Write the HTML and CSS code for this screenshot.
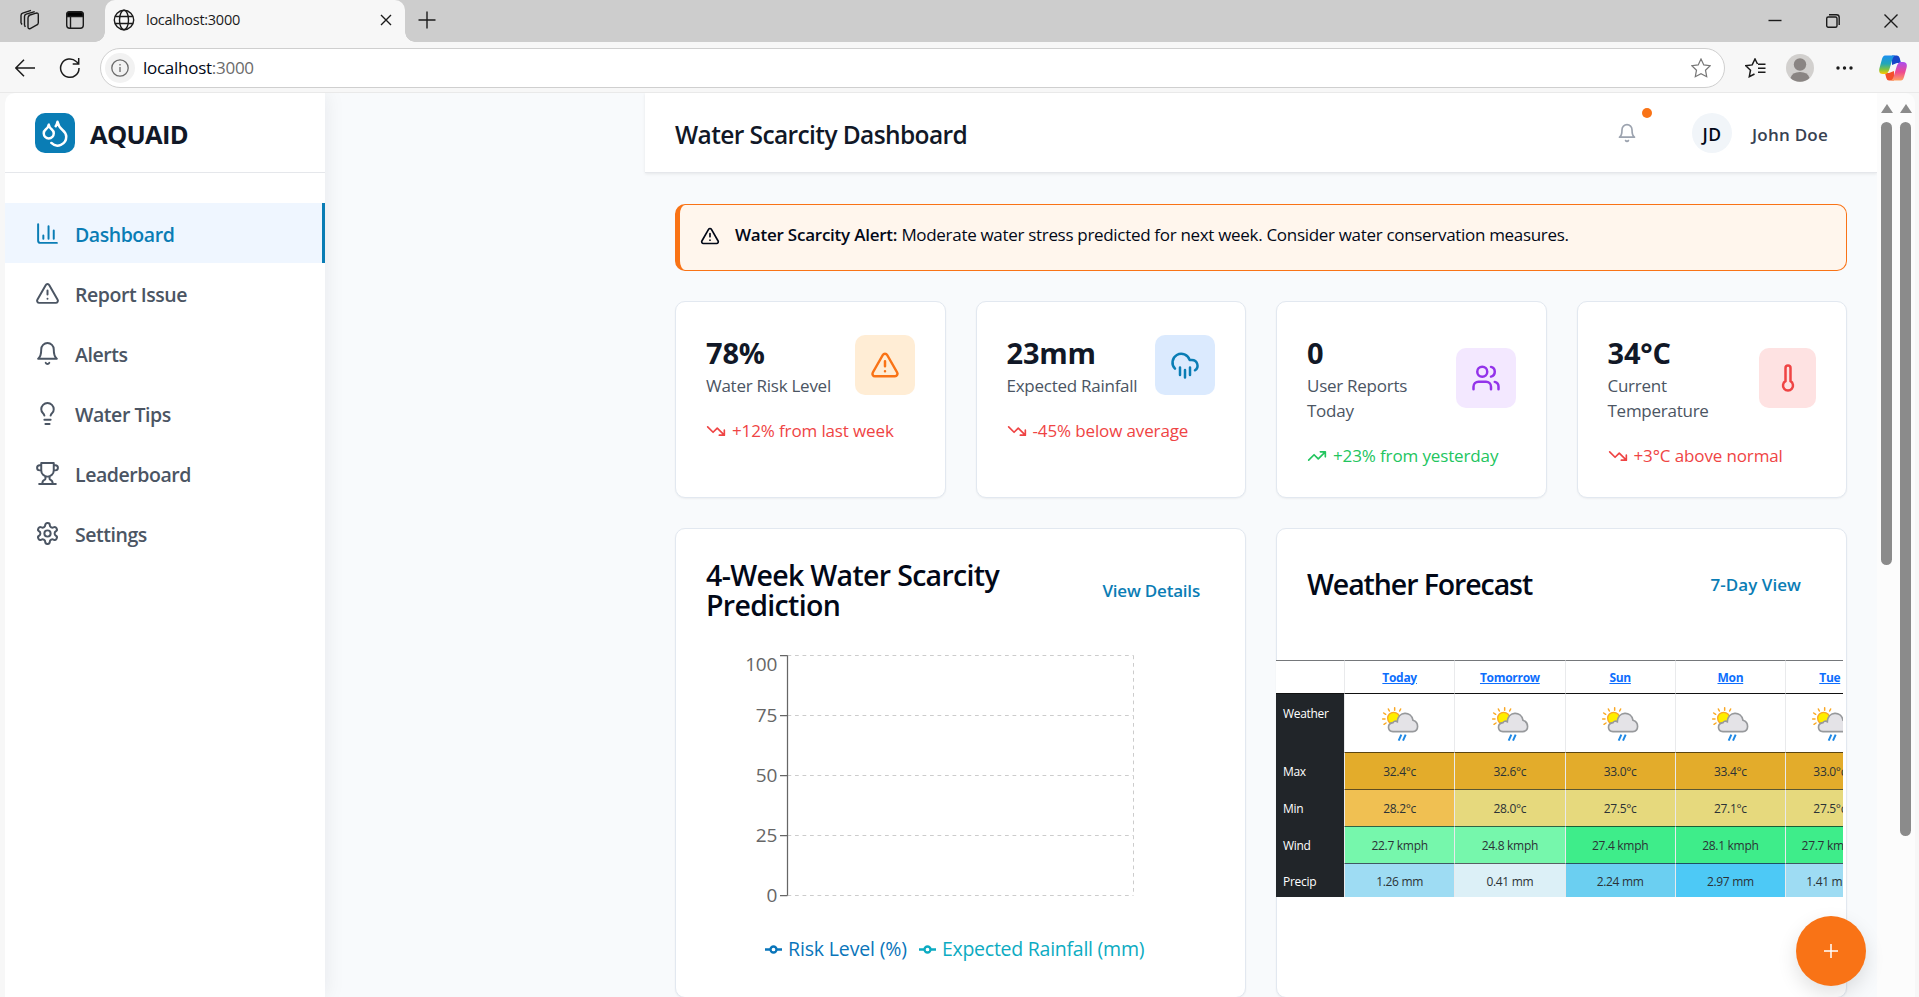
FILE: index.html
```html
<!DOCTYPE html>
<html lang="en">
<head>
<meta charset="utf-8">
<title>AQUAID - Water Scarcity Dashboard</title>
<link rel="stylesheet" href="styles.css">
</head>
<body>
<svg class="defs" width="0" height="0">
  <defs>
    <symbol id="i-chart" viewBox="0 0 24 24"><path d="M3 3v16a2 2 0 0 0 2 2h16M18 17V9M13 17V5M8 17v-3"/></symbol>
    <symbol id="i-warn" viewBox="0 0 24 24"><path d="m21.73 18-8-14a2 2 0 0 0-3.48 0l-8 14A2 2 0 0 0 4 21h16a2 2 0 0 0 1.73-3ZM12 9v4M12 17h.01"/></symbol>
    <symbol id="i-bell" viewBox="0 0 24 24"><path d="M6 8a6 6 0 0 1 12 0c0 7 3 9 3 9H3s3-2 3-9M10.3 21a1.94 1.94 0 0 0 3.4 0"/></symbol>
    <symbol id="i-bulb" viewBox="0 0 24 24"><path d="M15 14c.2-1 .7-1.7 1.5-2.5 1-.9 1.5-2.2 1.5-3.5A6 6 0 0 0 6 8c0 1 .2 2.2 1.5 3.5.7.7 1.3 1.5 1.5 2.5M9 18h6M10 22h4"/></symbol>
    <symbol id="i-trophy" viewBox="0 0 24 24"><path d="M6 9H4.5a2.5 2.5 0 0 1 0-5H6M18 9h1.5a2.5 2.5 0 0 0 0-5H18M4 22h16M10 14.66V17c0 .55-.47.98-.97 1.21C7.85 18.75 7 20.24 7 22M14 14.66V17c0 .55.47.98.97 1.21C16.15 18.75 17 20.24 17 22M18 2H6v7a6 6 0 0 0 12 0V2Z"/></symbol>
    <symbol id="i-gear" viewBox="0 0 24 24"><path d="M12.22 2h-.44a2 2 0 0 0-2 2v.18a2 2 0 0 1-1 1.73l-.43.25a2 2 0 0 1-2 0l-.15-.08a2 2 0 0 0-2.73.73l-.22.38a2 2 0 0 0 .73 2.73l.15.1a2 2 0 0 1 1 1.72v.51a2 2 0 0 1-1 1.74l-.15.09a2 2 0 0 0-.73 2.73l.22.38a2 2 0 0 0 2.73.73l.15-.08a2 2 0 0 1 2 0l.43.25a2 2 0 0 1 1 1.73V20a2 2 0 0 0 2 2h.44a2 2 0 0 0 2-2v-.18a2 2 0 0 1 1-1.73l.43-.25a2 2 0 0 1 2 0l.15.08a2 2 0 0 0 2.73-.73l.22-.39a2 2 0 0 0-.73-2.73l-.15-.08a2 2 0 0 1-1-1.74v-.5a2 2 0 0 1 1-1.74l.15-.09a2 2 0 0 0 .73-2.73l-.22-.38a2 2 0 0 0-2.73-.73l-.15.08a2 2 0 0 1-2 0l-.43-.25a2 2 0 0 1-1-1.73V4a2 2 0 0 0-2-2z"/><circle cx="12" cy="12" r="3"/></symbol>
    <symbol id="i-down" viewBox="0 0 24 24"><path d="M22 17 13.5 8.5l-5 5L2 7M16 17h6v-6"/></symbol>
    <symbol id="i-up" viewBox="0 0 24 24"><path d="m22 7-8.5 8.5-5-5L2 17M16 7h6v6"/></symbol>
    <symbol id="i-weather" viewBox="0 0 114 108">
      <g stroke="#f9a825" stroke-width="4.5" stroke-linecap="round"><path d="M41 5v8M22 9l3 6M59 9l-3 6M8 21l6 4M5 39h7M9 55l6-4"/></g>
      <circle cx="38" cy="37" r="18" fill="#ffee00" stroke="#f9a825" stroke-width="4"/>
      <path d="M36 77c-18-1-18-25 0-27 2-4 8-6 13-3 2-32 42-33 47-4 18 6 19 32-1 34z" fill="#e4e3e7" stroke="#97999c" stroke-width="5"/>
      <path d="M61 86l-8 18M74 86l-8 18" stroke="#1e88e5" stroke-width="6"/>
    </symbol>
  </defs>
</svg>

<div class="tabstrip">
  <svg class="ti workspaces" viewBox="0 0 22 22"><path d="M9.5 6.5 17 4.2q2.300-.6 2.300 1.600v8q0 1.600-1.500 2.200l-6.500 3.500q-2.300.8-2.300-1.500V9q0-1.900 1.500-2.500zM5.500 16.500V7.500q0-1.700 1.700-2.300l8.500-2.600M2 14V6.500q0-1.700 1.700-2.300L12 1.300M2 14l1 1.500M5.500 16.500l1 1.300"/></svg>
  <svg class="ti tabact" viewBox="0 0 20 20"><rect x="1.700" y="1.700" width="16.600" height="16.600" rx="3"/><path d="M2 6.500V4.500Q2 2 4.500 2h11Q18 2 18 4.500v2z" fill="#000"/><path d="M5.500 6v12"/></svg>
  <div class="tab">
    <svg class="globe" viewBox="0 0 22 22"><circle cx="11" cy="11" r="9.700"/><ellipse cx="11" cy="11" rx="4.500" ry="9.700"/><path d="M2 7.500h18M2 14.500h18"/></svg>
    <span class="tab-title">localhost:3000</span>
    <svg class="tab-x" viewBox="0 0 12 12"><path d="M1 1l10 10M11 1 1 11"/></svg>
  </div>
  <svg class="newtab" viewBox="0 0 18 18"><path d="M9 .5v17M.5 9h17"/></svg>
  <div class="winbtns">
    <svg width="14" height="14" viewBox="0 0 14 14"><path d="M.5 6.500h13"/></svg>
    <svg width="14" height="14" viewBox="0 0 14 14"><rect x=".7" y="3" width="10.300" height="10.300" rx="1.500"/><path d="M3 .8h7.500q2.700 0 2.700 2.700V11"/></svg>
    <svg width="14" height="14" viewBox="0 0 14 14"><path d="M.5.500l13 13M13.500.500l-13 13"/></svg>
  </div>
</div>

<div class="toolbar">
  <svg class="back" viewBox="0 0 20 18"><path d="M20 9H1M9 .7.800 9 9 17.300"/></svg>
  <svg class="reload" viewBox="0 0 22 22"><path d="M20 11a9.200 9.200 0 1 1-2.800-6.500L19.500 6.500M19.700 1v6h-6"/></svg>
  <div class="urlbar">
    <span class="info"><svg viewBox="0 0 18 18"><circle cx="9" cy="9" r="8.200"/><path d="M9 8v5M9 5v1.500"/></svg></span>
    <span class="url">localhost<i>:3000</i></span>
    <svg class="fav" viewBox="0 0 20 20"><path d="m10 1 2.800 5.900 6.400.8-4.700 4.500 1.200 6.500L10 15.600l-5.700 3.100 1.200-6.500L.8 7.700l6.400-.8z"/></svg>
  </div>
  <svg class="favs" viewBox="0 0 21 20"><path d="m12.500 6-2.500-5-2.800 5.900-6.400.8 4.700 4.500-1.200 6.500L9.500 16M13 6.200h7.500M13 10.200h7.500M13 14.200h7.500"/></svg>
  <svg class="profile" viewBox="0 0 28 28"><circle cx="14" cy="14" r="14" fill="#d2d0ce"/><circle cx="14" cy="10.500" r="6.200" fill="#8a8583"/><path d="M4.500 24q1.500-6 9.500-6t9.500 6a14 14 0 0 1-19 0z" fill="#8a8583"/></svg>
  <svg class="more" viewBox="0 0 17 4"><circle cx="2" cy="2" r="1.700"/><circle cx="8.500" cy="2" r="1.700"/><circle cx="15" cy="2" r="1.700"/></svg>
  <svg class="copilot" viewBox="0 0 28 26">
    <defs>
      <linearGradient id="cpa" x1="0" y1="0" x2="0" y2="1"><stop offset="0" stop-color="#1c8ff0"/><stop offset=".45" stop-color="#22a7b8"/><stop offset=".75" stop-color="#7fc241"/><stop offset="1" stop-color="#ffc800"/></linearGradient>
      <linearGradient id="cpb" x1="0" y1="0" x2="0" y2="1"><stop offset="0" stop-color="#a94ef0"/><stop offset=".55" stop-color="#ee4a90"/><stop offset="1" stop-color="#ffa060"/></linearGradient>
    </defs>
    <path d="M13 .5h5q2 0 2.700 2.500L22 8h-4l-5 2z" fill="#1746c8"/>
    <path d="M15 25.500h-5q-2 0-2.700-2.500L6 18h4l5-2z" fill="#f4502c"/>
    <path d="M6 .5h10q-1.800 1-2.500 3.500L10.500 14q-1.500 5-4.500 5H4q-5 0-3.500-6L3 4Q4 .5 6 .5z" fill="url(#cpa)"/>
    <path d="M22 25.500H12q1.800-1 2.500-3.500L17.500 12q1.500-5 4.500-5h2q5 0 3.500 6L25 22q-1 3.500-3 3.500z" fill="url(#cpb)"/>
  </svg>
</div>

<div class="page">
  <aside class="sidebar">
    <div class="brand">
      <span class="logo"><svg class="ln" viewBox="0 0 24 24"><path d="M7 16.300c2.200 0 4-1.830 4-4.050 0-1.160-.57-2.260-1.710-3.190S7.290 6.750 7 5.300c-.29 1.450-1.140 2.840-2.290 3.760S3 11.100 3 12.250c0 2.220 1.800 4.050 4 4.050zM12.560 6.600A10.970 10.970 0 0 0 14 3.020c.5 2.500 2 4.900 4 6.500s3 3.500 3 5.500a6.980 6.980 0 0 1-11.910 4.970"/></svg></span>
      <span class="brand-name">AQUAID</span>
    </div>
    <nav class="nav">
      <a class="nav-item active"><svg class="ln"><use href="#i-chart"/></svg><span>Dashboard</span></a>
      <a class="nav-item"><svg class="ln"><use href="#i-warn"/></svg><span>Report Issue</span></a>
      <a class="nav-item"><svg class="ln"><use href="#i-bell"/></svg><span>Alerts</span></a>
      <a class="nav-item"><svg class="ln"><use href="#i-bulb"/></svg><span>Water Tips</span></a>
      <a class="nav-item"><svg class="ln"><use href="#i-trophy"/></svg><span>Leaderboard</span></a>
      <a class="nav-item"><svg class="ln"><use href="#i-gear"/></svg><span>Settings</span></a>
    </nav>
  </aside>

  <div class="content">
    <header class="header">
      <h1 class="title">Water Scarcity Dashboard</h1>
      <div class="user">
        <span class="bell"><svg class="ln"><use href="#i-bell"/></svg><i class="dot"></i></span>
        <span class="avatar"><span>JD</span></span>
        <span class="user-name">John Doe</span>
      </div>
    </header>

    <main class="main">
      <div class="alert">
        <svg class="ln"><use href="#i-warn"/></svg>
        <p><b>Water Scarcity Alert:</b> Moderate water stress predicted for next week. Consider water conservation measures.</p>
      </div>

      <section class="stats">
        <article class="card stat">
          <div class="stat-head">
            <div class="stat-text"><div class="value">78%</div><div class="label">Water Risk Level</div></div>
            <span class="badge orange"><svg class="ln"><use href="#i-warn"/></svg></span>
          </div>
          <div class="trend"><svg class="ln"><use href="#i-down"/></svg><span>+12% from last week</span></div>
        </article>
        <article class="card stat">
          <div class="stat-head">
            <div class="stat-text"><div class="value">23mm</div><div class="label">Expected Rainfall</div></div>
            <span class="badge blue"><svg class="ln" viewBox="0 0 24 24"><path d="M4 14.899A7 7 0 1 1 15.710 8h1.790a4.500 4.500 0 0 1 2.500 8.242M16 14v6M8 14v6M12 16v6"/></svg></span>
          </div>
          <div class="trend"><svg class="ln"><use href="#i-down"/></svg><span>-45% below average</span></div>
        </article>
        <article class="card stat">
          <div class="stat-head">
            <div class="stat-text"><div class="value">0</div><div class="label">User Reports<br>Today</div></div>
            <span class="badge purple"><svg class="ln" viewBox="0 0 24 24"><path d="M16 21v-2a4 4 0 0 0-4-4H6a4 4 0 0 0-4 4v2M22 21v-2a4 4 0 0 0-3-3.870M16 3.130a4 4 0 0 1 0 7.750"/><circle cx="9" cy="7" r="4"/></svg></span>
          </div>
          <div class="trend up"><svg class="ln"><use href="#i-up"/></svg><span>+23% from yesterday</span></div>
        </article>
        <article class="card stat">
          <div class="stat-head">
            <div class="stat-text"><div class="value">34°C</div><div class="label">Current<br>Temperature</div></div>
            <span class="badge red"><svg class="ln" viewBox="0 0 24 24"><path d="M14 4v10.540a4 4 0 1 1-4 0V4a2 2 0 0 1 4 0Z"/></svg></span>
          </div>
          <div class="trend"><svg class="ln"><use href="#i-down"/></svg><span>+3°C above normal</span></div>
        </article>
      </section>

      <section class="panels">
        <article class="card panel prediction">
          <div class="panel-head"><h2>4-Week Water Scarcity<br>Prediction</h2><a class="link">View Details</a></div>
          <svg class="chart" viewBox="0 0 509 250">
            <g class="grid">
              <path d="M81.500 5.500h346M81.500 65.500h346M81.500 125.500h346M81.500 185.500h346M81.500 245.500h346M81.500 5.500v240M427.500 5.500v240"/>
            </g>
            <path class="axis" d="M81.500 5.500v240M74 5.500h7.500M74 65.500h7.500M74 125.500h7.500M74 185.500h7.500M74 245.500h7.500"/>
            <g class="ticks"><text x="71" y="21">100</text><text x="71" y="72">75</text><text x="71" y="132">50</text><text x="71" y="192">25</text><text x="71" y="252">0</text></g>
          </svg>
          <div class="legend">
            <span class="risk"><svg viewBox="0 0 17 9"><path d="M0 4.500h5M12 4.500h5"/><circle cx="8.500" cy="4.500" r="3"/></svg><span>Risk Level (%)</span></span>
            <span class="rain"><svg viewBox="0 0 17 9"><path d="M0 4.500h5M12 4.500h5"/><circle cx="8.500" cy="4.500" r="3"/></svg><span>Expected Rainfall (mm)</span></span>
          </div>
        </article>

        <article class="card panel">
          <div class="panel-head"><h2 class="narrow">Weather Forecast</h2><a class="link wide">7-Day View</a></div>
          <div class="forecast">
            <table>
              <colgroup><col class="c0"><col><col><col><col><col class="c5"></colgroup>
              <tr class="days"><th></th><td><a>Today</a></td><td><a>Tomorrow</a></td><td><a>Sun</a></td><td><a>Mon</a></td><td><a>Tue</a></td></tr>
              <tr class="sky"><th>Weather</th><td><svg><use href="#i-weather"/></svg></td><td><svg><use href="#i-weather"/></svg></td><td><svg><use href="#i-weather"/></svg></td><td><svg><use href="#i-weather"/></svg></td><td><svg><use href="#i-weather"/></svg></td></tr>
              <tr class="max"><th>Max</th><td class="a">32.4°c</td><td class="a">32.6°c</td><td class="a">33.0°c</td><td class="a">33.4°c</td><td class="a">33.0°c</td></tr>
              <tr class="min"><th>Min</th><td class="b">28.2°c</td><td class="c">28.0°c</td><td class="c">27.5°c</td><td class="c">27.1°c</td><td class="c">27.5°c</td></tr>
              <tr class="wind"><th>Wind</th><td class="d">22.7 kmph</td><td class="d">24.8 kmph</td><td class="e">27.4 kmph</td><td class="e">28.1 kmph</td><td class="e">27.7 kmph</td></tr>
              <tr class="precip"><th>Precip</th><td class="f">1.26 mm</td><td class="g">0.41 mm</td><td class="h">2.24 mm</td><td class="i">2.97 mm</td><td class="f">1.41 mm</td></tr>
            </table>
          </div>
        </article>
      </section>
    </main>
  </div>

  <div class="scroll inner"><i class="arrow"></i><i class="thumb"></i></div>
  <div class="scroll outer"><i class="arrow"></i><i class="thumb"></i></div>
  <button class="fab"><svg viewBox="0 0 14 14"><path d="M7 0v14M0 7h14"/></svg></button>
</div>
</body>
</html>
```
FILE: styles.css
```css
* { box-sizing: border-box; }
body {
  margin: 0; width: 1919px; height: 997px; overflow: hidden;
  display: flex; flex-direction: column;
  font-family: "Open Sans", "Noto Sans", sans-serif; color: #020817; background: #f7f7f7;
}
svg { display: block; flex: none; fill: none; }
h1, h2, p { margin: 0; }
.defs { position: absolute; }
.ln { stroke: currentColor; stroke-width: 2; stroke-linecap: round; stroke-linejoin: round; }

/* Browser chrome */
.tabstrip { flex: none; height: 42px; background: #cdcdcd; display: flex; align-items: center; position: relative; }
.tabstrip svg { stroke: #1b1b1b; stroke-width: 1.4; }
.workspaces { width: 22px; height: 22px; margin: 0 0 2px 19px; }
.tabact { width: 20px; height: 20px; margin: 0 0 2px 24px; }
.tab {
  width: 300px; height: 42px; margin-left: 20px; background: #f7f7f7; border-radius: 10px 10px 0 0;
  display: flex; align-items: center; padding: 0 13px 2px 8px; position: relative;
}
.tab::before, .tab::after { content: ""; position: absolute; bottom: 0; width: 10px; height: 10px; }
.tab::before { left: -10px; background: radial-gradient(circle at 0 0, #cdcdcd 9.500px, #f7f7f7 10px); }
.tab::after { right: -10px; background: radial-gradient(circle at 100% 0, #cdcdcd 9.500px, #f7f7f7 10px); }
.globe { width: 22px; height: 22px; }
.tab-title { margin-left: 11px; font-size: 14.500px; letter-spacing: -.27px; line-height: 20px; margin-bottom: 1px; flex: 1; color: #1b1b1b; }
.tab-x { width: 12px; height: 12px; }
.newtab { width: 18px; height: 18px; margin-left: 13px; margin-bottom: 3px; }
.winbtns { margin-left: auto; margin-right: 21px; display: flex; gap: 44px; }
.toolbar { flex: none; height: 51px; display: flex; align-items: center; padding: 1px 10px 0 15px; border-bottom: 1px solid #e9e9e9; }
.toolbar > svg { stroke: #1b1b1b; stroke-width: 1.5; }
.back { width: 20px; height: 18px; }
.reload { width: 22px; height: 22px; margin-left: 24px; }
.urlbar {
  width: 1625px; height: 40px; margin-left: 19px; border: 1px solid #cfcfcf; border-radius: 20px; background: #fff;
  display: flex; align-items: center; padding: 0 13px 0 4px;
}
.info { width: 30px; height: 30px; border-radius: 50%; background: #f2f2f2; display: grid; place-items: center; }
.info svg { width: 18px; height: 18px; stroke: #6b6b6b; stroke-width: 1.3; }
.url { margin-left: 8px; font-size: 17px; letter-spacing: -.27px; flex: 1; }
.url i { font-style: normal; color: #6b6b6b; }
.fav { width: 20px; height: 20px; stroke: #767676; stroke-width: 1.2; }
.favs { width: 21px; height: 20px; margin-left: 20px; }
.toolbar .profile { width: 28px; height: 28px; margin-left: 20px; stroke: none; }
.toolbar .more { width: 17px; height: 4px; margin-left: 22px; fill: #1b1b1b; stroke: none; }
.toolbar .copilot { width: 28px; height: 26px; margin-left: 26px; stroke: none; }

/* App shell */
.page { flex: 1; min-height: 0; margin: 0 4px 0 5px; display: flex; position: relative; background: #f8fafc; border-radius: 10px 10px 0 0; overflow: hidden; }
.sidebar { width: 320px; flex: none; background: #fff; box-shadow: 0 0 20px rgba(15, 23, 42, .08); }
.brand { height: 80px; border-bottom: 1px solid #e5e7eb; display: flex; align-items: center; padding: 1px 0 0 30px; gap: 15px; }
.logo { width: 40px; height: 40px; border-radius: 10px; background: #0a7db5; color: #fff; display: grid; place-items: center; }
.logo svg { width: 30px; height: 30px; }
.brand-name { padding-top: 1px; font-size: 25.500px; letter-spacing: -.7px; font-weight: 700; color: #111827; }
.nav { padding-top: 30px; }
.nav-item { height: 60px; padding-left: 30px; display: flex; align-items: center; gap: 15px; font-size: 19.500px; letter-spacing: -.45px; font-weight: 600; color: #4b5563; }
.nav-item span { padding-top: 2px; }
.nav-item svg { width: 25px; height: 25px; stroke-width: 1.900; }
.nav-item.active { background: #eff6ff; color: #0a7db5; border-right: 3px solid #0a7db5; }
.content { width: 1232px; margin-left: 320px; flex: none; }
.header { height: 80px; background: #fff; border-bottom: 1px solid #e5e7eb; box-shadow: 0 1px 3px rgba(0, 0, 0, .08); display: flex; align-items: center; justify-content: space-between; padding: 1px 49px 0 30px; }
.title { padding-top: 3px; font-size: 24.500px; letter-spacing: -.6px; font-weight: 600; color: #111827; }
.user { display: flex; align-items: center; }
.bell { position: relative; color: #9ca3af; }
.bell svg { width: 20px; height: 20px; }
.dot { position: absolute; left: 25px; top: -15px; width: 10px; height: 10px; border-radius: 50%; background: #f97316; }
.avatar { width: 40px; height: 40px; margin-left: 55px; border-radius: 50%; background: #f1f5f9; display: grid; place-items: center; font-size: 17.500px; letter-spacing: .5px; font-weight: 600; }
.avatar span { padding-top: 2px; }
.user-name { margin-left: 20px; padding-top: 2px; font-size: 17px; letter-spacing: .23px; font-weight: 600; color: #374151; }
.main { padding: 31px 30px 0; }
.alert { height: 67px; border: 1px solid #f97316; border-left-width: 5px; border-radius: 10px; background: #fff6ed; padding: 18px 20px; display: flex; gap: 15px; }
.alert svg { width: 20px; height: 20px; margin-top: 3px; }
.alert p { margin-top: -1px; font-size: 17px; letter-spacing: -.31px; line-height: 25px; white-space: nowrap; }
.alert b { font-weight: 600; letter-spacing: -.23px; }
.card { background: #fff; border: 1px solid #e2e8f0; border-radius: 10px; box-shadow: 0 1px 2px rgba(0, 0, 0, .05); }

/* Stat cards */
.stats { margin-top: 30px; display: grid; grid-template-columns: repeat(4, 1fr); gap: 30px; }
.stat { height: 197px; padding: 30px; }
.stat-head { display: flex; justify-content: space-between; align-items: center; }
.stat-text { padding-top: 1px; }
.value { font-size: 29px; letter-spacing: -.2px; line-height: 40px; font-weight: 700; color: #111827; }
.label { font-size: 17px; letter-spacing: -.26px; line-height: 25px; color: #4b5563; white-space: nowrap; }
.badge { width: 60px; height: 60px; border-radius: 10px; display: grid; place-items: center; }
.badge svg { width: 30px; height: 30px; }
.orange { background: #ffedd5; color: #f97316; }
.blue { background: #dbeafe; color: #0a7db5; }
.purple { background: #f3e8ff; color: #9333ea; }
.red { width: 57px; background: #fee2e2; color: #ef4444; }
.trend { margin-top: 20px; display: flex; align-items: center; gap: 6px; font-size: 17px; letter-spacing: -.13px; line-height: 25px; color: #ef4444; white-space: nowrap; }
.trend svg { width: 20px; height: 20px; }
.trend.up { color: #22c55e; }

/* Panels */
.panels { margin-top: 30px; display: grid; grid-template-columns: repeat(2, 1fr); gap: 30px; }
.panel { height: 470px; padding: 30px; min-width: 0; }
.panel-head { display: flex; align-items: center; justify-content: space-between; min-height: 50px; padding-right: 15px; }
.prediction .panel-head { padding-top: 1px; }
.panel h2 { font-size: 28.500px; letter-spacing: -.67px; line-height: 30px; font-weight: 600; }
.panel h2.narrow { letter-spacing: -1.090px; }
.link { font-size: 17px; letter-spacing: -.2px; font-weight: 600; color: #0a7db5; }
.link.wide { letter-spacing: .05px; }
.chart { width: 509px; height: 250px; margin-top: 30px; overflow: visible; }
.grid { stroke: #ccc; stroke-dasharray: 3.750 3.750; }
.axis { stroke: #666; stroke-width: 1.250; }
.ticks { font-size: 19px; letter-spacing: -.3px; fill: #666; text-anchor: end; }
.legend { display: flex; gap: 12px; margin: 35px 0 0 59px; font-size: 19.500px; letter-spacing: -.25px; line-height: 28px; white-space: nowrap; }
.legend > span { display: flex; align-items: center; gap: 6px; }
.legend svg { width: 17px; height: 9px; stroke: currentColor; stroke-width: 2.300; }
.legend .risk { color: #0a75ba; letter-spacing: -.15px; }
.rain { color: #0cabc2; }
.forecast { margin: 51px 0 0 -31px; width: 567px; overflow: hidden; }
.forecast table { width: 597.500px; table-layout: fixed; border-collapse: separate; border-spacing: 0; font-size: 12px; letter-spacing: -.3px; line-height: 16px; background: #fff; }
.c0 { width: 68px; }
.c5 { width: 88.500px; }
.forecast td { padding: 0; text-align: center; border-left: 1px solid #e9eaec; color: #2b3236; vertical-align: middle; }
.forecast th { padding: 2px 0 0 7px; text-align: left; font-weight: 400; background: #212529; color: #fff; }
.days { height: 34px; }
.forecast .days th, .forecast .days td { border-top: 1px solid #75787b; border-bottom: 1px solid #111; background: #fff; padding-top: 1px; }
.days a { color: #0d6efd; font-weight: 700; text-decoration: underline; }
.sky { height: 58px; }
.forecast .sky th { vertical-align: top; padding-top: 12px; }
.sky svg { width: 38px; height: 36px; margin: 2px auto 0; }
.max, .min, .wind { height: 37px; }
.precip { height: 34px; }
.max td, .min td, .wind td, .precip td { padding-top: 1px; border-top: 1px solid rgba(0, 0, 0, .6); }
.forecast .precip td { padding-top: 3px; }
.forecast .precip th { padding-top: 4px; }
.a { background: #e3ac2b; } .b { background: #f0c052; } .c { background: #e6d97d; }
.d { background: #76f7ac; } .e { background: #3eed8a; }
.f { background: #9edcf3; } .g { background: #dcf0f7; } .h { background: #6bcff1; } .i { background: #4dc9f6; }

/* Overlays */
.scroll { width: 19px; flex: none; background: #fcfcfc; display: flex; flex-direction: column; align-items: center; }
.arrow { margin-top: 11px; border: 6px solid transparent; border-top: 0; border-bottom: 9px solid #8b8b8b; }
.thumb { margin-top: 9px; width: 11px; border-radius: 6px; background: #8b8b8b; }
.inner .thumb { height: 443px; }
.outer .thumb { height: 714px; }
.fab { position: absolute; right: 49px; top: 823px; width: 70px; height: 70px; border: 0; border-radius: 50%; background: #f97316; display: grid; place-items: center; box-shadow: 0 8px 20px rgba(0, 0, 0, .12); }
.fab svg { width: 14px; height: 14px; stroke: #fff; stroke-width: 1.500; }
```
